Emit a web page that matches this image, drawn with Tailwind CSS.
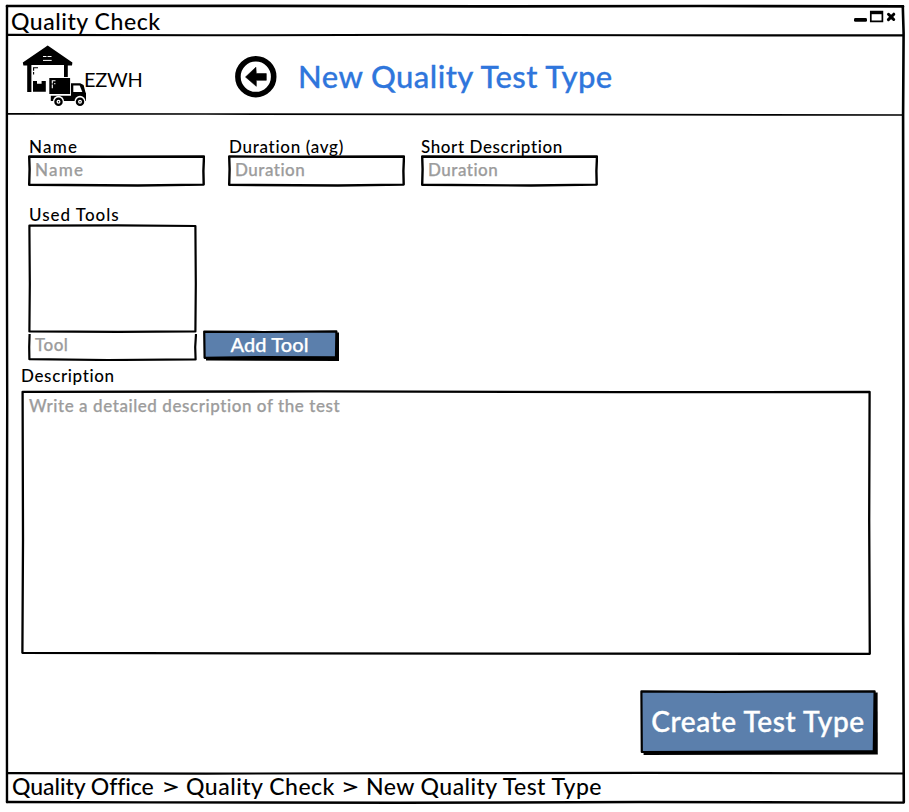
<!DOCTYPE html>
<html lang="en">
<head>
<meta charset="utf-8">
<title>Quality Check</title>
<script src="https://cdn.jsdelivr.net/npm/@tailwindcss/browser@4"></script>
</head>
<body class="bg-white text-black font-['Lato','Liberation_Sans',sans-serif] font-medium overflow-hidden">
<div class="relative w-[909px] h-[812px] pl-1.5 pt-[5px]">
  <!-- window outline -->
  <svg class="absolute inset-0 pointer-events-none" width="909" height="812" fill="none" stroke="#000" stroke-linecap="round">
    <path stroke-width="2.7" d="M7 6 L240 5.8 L480 6.4 L700 6 L903 6.4"/>
    <path stroke-width="2.4" d="M7 6 L6.8 200 L7.2 400 L6.8 600 L7 802"/>
    <path stroke-width="2.6" d="M902.8 6.4 L903.6 33 L903.1 115 L903.5 400 L903.2 620 L903.8 802"/>
    <path stroke-width="2.4" d="M7 802 L150 802.4 L400 802.8 L640 802 L903.6 802.6"/>
  </svg>

  <div class="w-[898px] h-[799px] flex flex-col">
    <header class="relative h-[30px] shrink-0 flex justify-between pl-[5px] pr-[7px]">
      <h1 class="pt-px text-[23px] leading-[31px] tracking-[.55px] font-medium whitespace-nowrap">Quality Check</h1>
      <svg class="mt-1" width="44" height="16" viewBox="853 9 44 16">
        <rect x="854" y="18" width="13" height="3.8" rx="1.4"/>
        <path d="M870.8 11.6h11.6v9.8h-11.6z" fill="none" stroke="#000" stroke-width="1.7"/>
        <path d="M870 11h13v3.2h-13z"/>
        <path d="M888.5 14.3l5.2 5.2M893.8 14.2l-5.4 5.4" stroke="#000" stroke-width="3" stroke-linecap="round"/>
      </svg>
      <svg class="absolute left-0 bottom-[-2px]" width="898" height="4" viewBox="0 0 898 4" fill="none" stroke="#000"><path stroke-width="2.1" d="M1 1.9 L200 2.3 L430 1.8 L640 2.3 L897 2.4"/></svg>
    </header>

    <section class="relative h-[79px] shrink-0 flex items-start">
      <svg class="ml-4 mt-[9px] shrink-0" width="66" height="64" viewBox="22 44 66 64">
        <path d="M47.7 45.5 L72.4 62.5 L72 65.6 L67.8 65.6 L67.8 77 L64 77 L64 65 L31.4 65 L31.4 92 L27.2 92 L27.2 65.6 L23.4 65.6 L22.8 62.5Z"/>
        <path d="M43 56.5h3.5M47.5 56.5h4M43 60.4h8.7" stroke="#fff" stroke-width="1"/>
        <path d="M38 67.7h-4.4v3M33.6 72v2.4" fill="none" stroke="#000" stroke-width="1.1"/>
        <path d="M33 81h4v2.7h4.6V81h4.2v10.8H33z"/>
        <path d="M49.3 78h20.8v16H49.3z"/>
        <path d="M55.5 80.8h-3.2v2.6M52.3 84.6v3.6M54.8 83v1.2" fill="none" stroke="#fff" stroke-width="1.1"/>
        <path d="M50.8 95.7H71V83.3h9.2l3.4 1.7 1.8 7 .6 1.3v7.6H50.8z"/>
        <path d="M73.3 85.4h6.4l2.6 6.6h-9z" fill="#fff"/>
        <circle cx="58.5" cy="101.3" r="5.5" fill="#fff"/><circle cx="80" cy="101.3" r="5.5" fill="#fff"/>
        <circle cx="58.5" cy="101.7" r="3.1" fill="#fff" stroke="#000" stroke-width="2.3"/><circle cx="80" cy="101.7" r="3.1" fill="#fff" stroke="#000" stroke-width="2.3"/>
        <circle cx="58.5" cy="101.7" r=".7"/><circle cx="80" cy="101.7" r=".7"/>
      </svg>
      <span class="ml-[-4px] mt-[30px] w-[60px] text-[20px] leading-[28px] tracking-[-.3px] font-normal">EZWH</span>
      <svg class="ml-[91px] mt-[20.5px] shrink-0" width="42" height="42" viewBox="234.7 56 42 42">
        <circle cx="255.5" cy="76.7" r="17.9" fill="none" stroke="#000" stroke-width="5.6"/>
        <path d="M245.2 77 L255.6 67.2 L256 73.6 H266 V80.3 H256 V86.3Z" stroke="#000" stroke-width=".6" stroke-linejoin="round"/>
      </svg>
      <h2 class="ml-[21px] mt-[22px] text-[31px] leading-[38px] tracking-[.45px] font-medium text-[#2f76dc] whitespace-nowrap [-webkit-text-stroke:.3px]">New Quality Test Type</h2>
      <svg class="absolute left-0 bottom-[-2px]" width="898" height="4" viewBox="0 0 898 4" fill="none" stroke="#000"><path stroke-width="1.7" d="M1 1.8 L200 2 L430 2.3 L640 2.7 L897 3"/></svg>
    </section>

    <main class="h-[658px] shrink-0 flex flex-col pl-4 pt-[23px]">
      <div class="flex pl-[6px]">
        <label class="w-[200px] block">
          <span class="block h-[18px] pl-[1px] pt-px text-[17px] leading-[18px] tracking-[1.2px]">Name</span>
          <span class="relative block w-[177px] h-[32px] pl-[7px] pt-[5px] text-[17px] leading-[20px] tracking-[1.2px] text-[#9c9c9c] [-webkit-text-stroke:.25px]">
            <svg class="absolute inset-0" width="177" height="32" fill="none" stroke="#000" stroke-width="2.4" stroke-linejoin="round"><path d="M1.2 1.5 L80 1.8 L176 1.5 L175.4 16 L175.7 29.6 L110 30.5 L1.2 29.8 L1.6 14Z"/></svg>Name</span>
        </label>
        <label class="w-[193px] block">
          <span class="block h-[18px] pl-px pt-px text-[17px] leading-[18px] tracking-[.7px] whitespace-nowrap">Duration (avg)</span>
          <span class="relative block w-[177px] h-[32px] pl-[7px] pt-[5px] text-[17px] leading-[20px] tracking-[.5px] text-[#9c9c9c] [-webkit-text-stroke:.25px]">
            <svg class="absolute inset-0" width="177" height="32" fill="none" stroke="#000" stroke-width="2.4" stroke-linejoin="round"><path d="M1.2 1.5 L80 1.8 L176 1.5 L175.4 16 L175.7 29.6 L110 30.5 L1.2 29.8 L1.6 14Z"/></svg>Duration</span>
        </label>
        <label class="block">
          <span class="block h-[18px] pt-px text-[17px] leading-[18px] tracking-[.6px] whitespace-nowrap">Short Description</span>
          <span class="relative block w-[177px] h-[32px] pl-[7px] pt-[5px] text-[17px] leading-[20px] tracking-[.5px] text-[#9c9c9c] [-webkit-text-stroke:.25px]">
            <svg class="absolute inset-0" width="177" height="32" fill="none" stroke="#000" stroke-width="2.4" stroke-linejoin="round"><path d="M1.2 1.5 L80 1.8 L176 1.5 L175.4 16 L175.7 29.6 L110 30.5 L1.2 29.8 L1.6 14Z"/></svg>Duration</span>
        </label>
      </div>

      <div class="mt-[18px] pl-[6px] flex items-end">
        <div class="w-[175px]">
          <span class="block h-[19px] pl-[1px] text-[17px] leading-[20px] tracking-[1px]">Used Tools</span>
          <svg class="block" width="169" height="109" fill="none" stroke="#000" stroke-width="2.2" stroke-linejoin="round"><path d="M1.4 1.6 L90 1.4 L167.4 2 L167.8 60 L167.4 107.4 L90 107.8 L1.4 107.4 L1.8 60Z"/></svg>
          <span class="relative block w-[169px] h-[28px] pl-[7px] pt-[2px] text-[17px] leading-[20px] tracking-[.5px] text-[#9c9c9c] [-webkit-text-stroke:.25px]">
            <svg class="absolute inset-0" width="169" height="28" fill="none" stroke="#000" stroke-width="2.2" stroke-linejoin="round"><path d="M1.6 1 L1.2 14 L1.4 26.2 L80 27 L167.6 26.4 L167.2 14 L168 1"/></svg>Tool</span>
        </div>
        <button class="relative w-[137px] h-[31px] pr-[4px] pb-[4px] text-[20px] leading-[26px] tracking-[.1px] text-white font-medium [-webkit-text-stroke:.25px]">
          <svg class="absolute inset-0" width="137" height="31"><path d="M3 3 L136 2.5 L136 31 L3 30.5Z"/><path d="M1.2 1.6 L60 2 L133.4 1.4 L133 27.4 L60 27 L1.6 27.8Z" fill="#5b7fac" stroke="#000" stroke-width="2.2" stroke-linejoin="round"/></svg>
          <span class="relative">Add Tool</span>
        </button>
      </div>

      <label class="block mt-[4px]">
        <span class="block h-[25px] text-[17px] leading-[22px] tracking-[.65px] -ml-px">Description</span>
        <span class="relative block w-[850px] h-[265px] -ml-px pl-[8px] pt-[6px] text-[17px] leading-[20px] tracking-[.57px] text-[#9c9c9c] [-webkit-text-stroke:.25px]">
          <svg class="absolute inset-0" width="850" height="265" fill="none" stroke="#000" stroke-linejoin="round" stroke-width="2.3"><path d="M1.6 1.8 L300 1.4 L600 2.2 L848.6 2 L848.2 130 L848.8 263.8 L560 263.6 L260 263.4 L1.4 262.8 L2 150Z"/></svg>Write a detailed description of the test</span>
      </label>

      <button class="relative self-end mr-[26px] mt-[35px] w-[238px] h-[65px] pr-[2px] pb-[3px] text-[28px] tracking-[.6px] text-white font-medium whitespace-nowrap [-webkit-text-stroke:.4px]">
        <svg class="absolute inset-0" width="238" height="65"><path d="M3 3 L237.6 2.6 L237.8 64.6 L3.6 65Z"/><path d="M1.4 1.4 L80 1.8 L234.6 1.4 L233.8 61.2 L1.8 62Z" fill="#5b7fac" stroke="#000" stroke-width="2.2" stroke-linejoin="round"/></svg>
        <span class="relative">Create Test Type</span>
      </button>
    </main>

    <footer class="relative h-[32px] shrink-0 pl-[6px]">
      <svg class="absolute left-0 top-[-2px]" width="898" height="5" viewBox="0 0 898 5" fill="none" stroke="#000"><path stroke-width="2.2" d="M1 3.2 L200 3.6 L430 3.2 L640 2.8 L897 3.5"/></svg>
      <nav class="flex text-[23px] leading-[29px] whitespace-nowrap">
        <span class="w-[144px] tracking-[-.05px]">Quality Office</span>
        <span class="w-[29px] text-center scale-x-150">&gt;</span>
        <span class="w-[151px] pl-px tracking-[.5px]">Quality Check</span>
        <span class="w-[28px] text-center scale-x-150">&gt;</span>
        <span class="pl-[2px] tracking-[.45px]">New Quality Test Type</span>
      </nav>
    </footer>
  </div>
</div>
</body>
</html>
